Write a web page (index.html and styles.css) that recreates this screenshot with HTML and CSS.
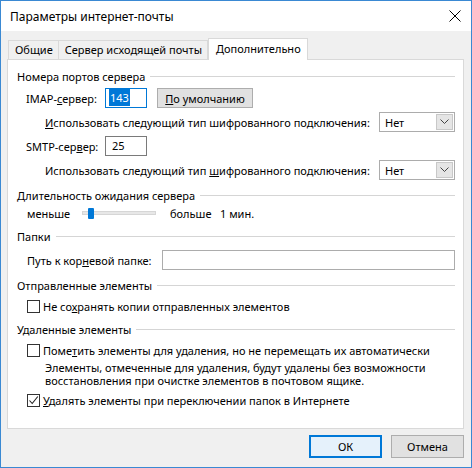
FILE: index.html
```html
<!DOCTYPE html>
<html>
<head>
<meta charset="utf-8">
<link rel="stylesheet" href="styles.css">
</head>
<body>
<div class="window">
  <div class="titlebar">
    <span class="title">Параметры интернет-почты</span>
    <svg class="close" width="12" height="12" viewBox="0 0 12 12"><path d="M0.5 0.5L11.5 11.5M11.5 0.5L0.5 11.5" stroke="#000" stroke-width="1"/></svg>
  </div>
  <div class="content">
    <div class="tabs">
      <div class="tab">Общие</div>
      <div class="tab">Сервер исходящей почты</div>
      <div class="tab active">Дополнительно</div>
    </div>
    <div class="panel">
      <!-- Номера портов -->
      <div class="group">Номера портов сервера</div>
      <div class="row port">
        <span class="lbl">IMAP-<u>с</u>ервер:</span>
        <span class="field focus"><span class="sel">143</span></span>
        <span class="btn default-btn"><u>П</u>о умолчанию</span>
      </div>
      <div class="row enc">
        <span><u>И</u>спользовать следующий тип шифрованного подключения:</span>
        <span class="combo"><span class="val">Нет</span><span class="arrow"><svg width="9" height="6" viewBox="0 0 9 6"><path d="M0.5 0.5L4.5 4.5L8.5 0.5" fill="none" stroke="#444"/></svg></span></span>
      </div>
      <div class="row port">
        <span class="lbl">SMTP-сер<u>в</u>ер:</span>
        <span class="field">25</span>
      </div>
      <div class="row enc">
        <span>Использовать следующий тип <u>ш</u>ифрованного подключения:</span>
        <span class="combo"><span class="val">Нет</span><span class="arrow"><svg width="9" height="6" viewBox="0 0 9 6"><path d="M0.5 0.5L4.5 4.5L8.5 0.5" fill="none" stroke="#444"/></svg></span></span>
      </div>

      <!-- Таймаут -->
      <div class="group"><span><u>Д</u>лительность ожидания сервера</span></div>
      <div class="row slider-row">
        <span class="less">меньше</span>
        <span class="track"><span class="thumb"></span></span>
        <span class="more">больше</span>
        <span>1 мин.</span>
      </div>

      <!-- Папки -->
      <div class="group">Папки</div>
      <div class="row path">
        <span class="lbl-path">Путь к кор<u>н</u>евой папке:</span>
        <span class="field wide"></span>
      </div>

      <!-- Отправленные -->
      <div class="group">Отправленные элементы</div>
      <div class="row check">
        <span class="box"></span>
        <span>Не со<u>х</u>ранять копии отправленных элементов</span>
      </div>

      <!-- Удаленные -->
      <div class="group">Удаленные элементы</div>
      <div class="row check">
        <span class="box"></span>
        <span>Поме<u>т</u>ить элементы для удаления, но не перемещать их автоматически</span>
      </div>
      <p class="note">Элементы, отмеченные для удаления, будут удалены без возможности восстановления при очистке элементов в почтовом ящике.</p>
      <div class="row check">
        <span class="box checked"><svg width="11" height="11" viewBox="0 0 11 11"><path d="M1.5 5.5L4.2 8.5L9.8 1.5" fill="none" stroke="#222" stroke-width="1.1"/></svg></span>
        <span><u>У</u>далять элементы при переключении папок в Интернете</span>
      </div>
    </div>
    <div class="buttons">
      <span class="btn ok">ОК</span>
      <span class="btn">Отмена</span>
    </div>
  </div>
</div>
</body>
</html>
```

FILE: styles.css
```css
* {
  box-sizing: border-box;
}

body {
  margin: 0;
  font-family: "Noto Sans", "Open Sans", sans-serif;
  font-size: 11px;
  color: #000;
}

.window {
  width: 472px;
  height: 468px;
  border: 1px solid #3a89d3;
  background: #f0f0f0;
  display: flex;
  flex-direction: column;
}

.titlebar {
  height: 30px;
  background: #fff;
  display: flex;
  align-items: center;
  justify-content: space-between;
  padding: 0 10px 0 9px;
}
.title {
  font-size: 12px;
}

.content {
  flex: 1;
  padding: 6px 7px 0 6px;
  display: flex;
  flex-direction: column;
}

/* Вкладки */
.tabs {
  display: flex;
  align-items: flex-end;
  height: 22px;
  padding-left: 1px;
}
.tab {
  height: 19px;
  line-height: 17px;
  padding: 0 5px 0 6px;
  border: 1px solid #d9d9d9;
  border-bottom: none;
  margin-right: -1px;
  background: #f0f0f0;
}
.tab.active {
  height: 22px;
  line-height: 20px;
  padding: 0 6px 0 7px;
  background: #fff;
  margin-left: 1px;
  margin-bottom: -1px;
  position: relative;
  z-index: 1;
}

.panel {
  height: 370px;
  background: #fff;
  border: 1px solid #d9d9d9;
  padding: 8px 8px 0 9px;
  display: flex;
  flex-direction: column;
}

.group {
  height: 16px;
  display: flex;
  align-items: center;
  white-space: nowrap;
}
.group::after {
  content: "";
  flex: 1;
  height: 1px;
  background: #d5d5d5;
  margin-left: 5px;
}

.row {
  display: flex;
  align-items: center;
  white-space: nowrap;
}

.port {
  height: 20px;
  margin-top: 4px;
  padding-left: 9px;
}
.lbl {
  width: 79px;
}
.field {
  height: 20px;
  width: 42px;
  border: 1px solid #7a7a7a;
  padding: 0 6px;
  line-height: 18px;
  background: #fff;
}
.field.focus {
  border-color: #0078d7;
  padding-left: 3px;
}
.sel {
  background: #0078d7;
  color: #fff;
  padding: 1px 1px;
}

.btn {
  display: inline-flex;
  align-items: center;
  justify-content: center;
  height: 20px;
  background: #e1e1e1;
  border: 1px solid #adadad;
  flex-shrink: 0;
}
.default-btn {
  width: 96px;
  margin-left: 10px;
}

.enc {
  height: 20px;
  margin-top: 4px;
  padding-left: 28px;
  justify-content: space-between;
}
.combo {
  width: 76px;
  height: 20px;
  border: 1px solid #acacac;
  display: flex;
  align-items: center;
  justify-content: space-between;
  padding: 1px;
  background: #fff;
}
.combo .val {
  padding-left: 4px;
}
.arrow {
  width: 17px;
  height: 16px;
  background: #e5e5e5;
  border: 1px solid #c8c8c8;
  display: flex;
  align-items: center;
  justify-content: center;
}

.enc + .group,
.row + .group,
.note + .group {
  margin-top: 7px;
}

.slider-row {
  height: 16px;
  margin-top: 2px;
  padding-left: 10px;
}
.less {
  width: 55px;
}
.track {
  width: 74px;
  height: 4px;
  background: #e7e7e7;
  border: 1px solid #d6d6d6;
  display: flex;
  align-items: center;
  padding-left: 5px;
}
.thumb {
  width: 6px;
  height: 11px;
  background: #0078d7;
  border-radius: 1px;
}
.more {
  margin-left: 14px;
  width: 50px;
}

.path {
  height: 20px;
  margin-top: 6px;
  padding-left: 10px;
}
.lbl-path {
  width: 135px;
}
.field.wide {
  flex: 1;
  border-color: #acacac;
}

.check {
  height: 16px;
  margin-top: 5px;
  padding-left: 10px;
}
.box {
  width: 13px;
  height: 13px;
  flex-shrink: 0;
  border: 1px solid #333;
  margin-right: 3px;
  display: flex;
  align-items: center;
  justify-content: center;
}

.note {
  margin: 3px 0 0 28px;
  line-height: 13px;
  width: 385px;
}

.buttons {
  display: flex;
  justify-content: flex-end;
  gap: 9px;
  margin-top: 6px;
}
.buttons .btn {
  width: 73px;
  height: 23px;
}
.buttons .ok {
  border: 2px solid #0078d7;
  background: #e5f1fb;
}
```
